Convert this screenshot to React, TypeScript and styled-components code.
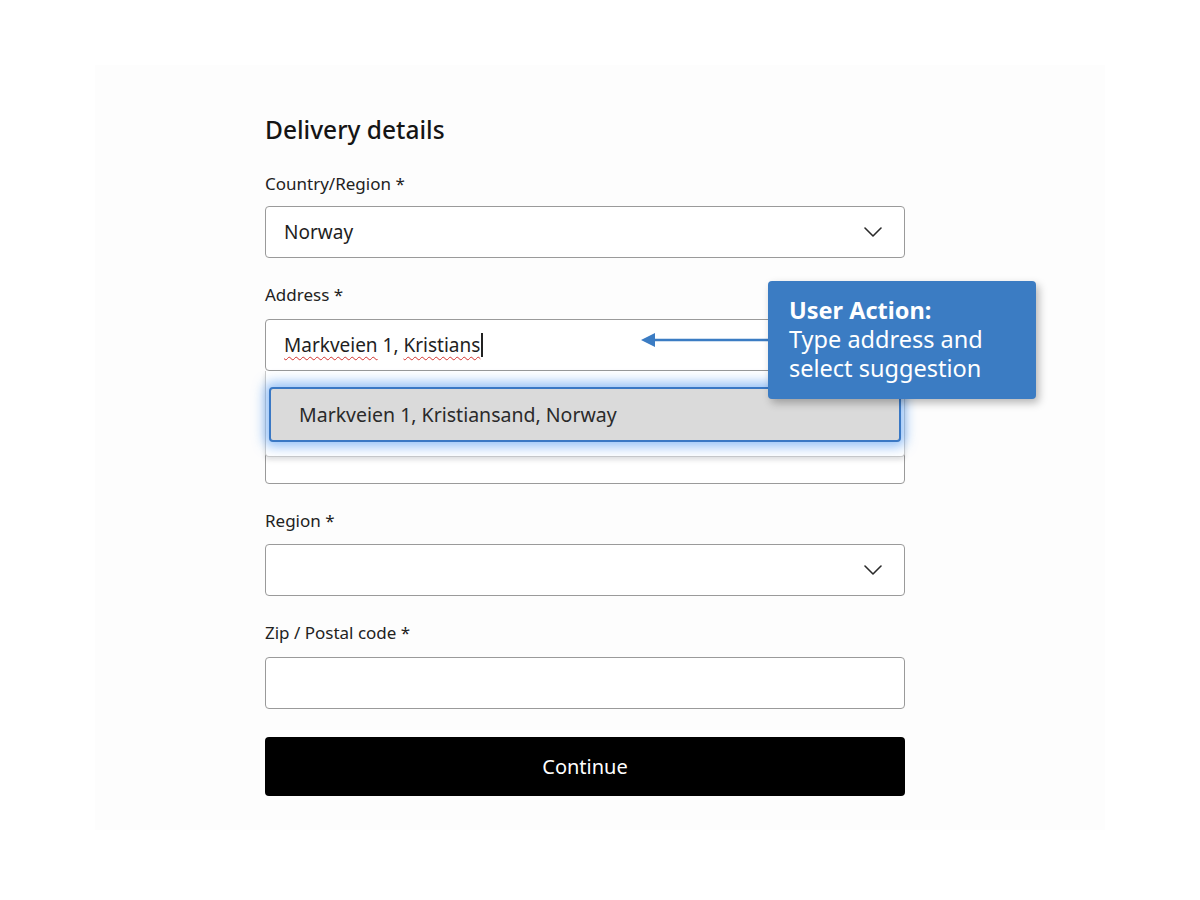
import React from "react";
import styled, { createGlobalStyle } from "styled-components";

const GlobalStyle = createGlobalStyle`
  html, body {
    margin: 0;
    padding: 0;
    background: #ffffff;
  }
  body {
    font-family: "Noto Sans", "Open Sans", Arial, sans-serif;
    color: #1c1c1c;
  }
`;

const Page = styled.div`
  width: 1200px;
  height: 900px;
  display: flex;
  justify-content: center;
  align-items: flex-start;
  box-sizing: border-box;
  padding-top: 65px;
`;

const Backdrop = styled.div`
  width: 1010px;
  height: 765px;
  background: #fdfdfd;
  display: flex;
  justify-content: center;
`;

const Form = styled.div`
  width: 640px;
  margin-left: -30px;
  padding-top: 48px;
  display: flex;
  flex-direction: column;
  gap: 27px;
`;

const Heading = styled.h1`
  margin: 0;
  font-size: 24.5px;
  line-height: 34px;
  font-weight: 500;
  color: #151515;
`;

const Field = styled.div<{ $gap?: number }>`
  position: relative;
  display: flex;
  flex-direction: column;
  gap: ${(p) => p.$gap ?? 13}px;
`;

const Label = styled.label`
  height: 20px;
  font-size: 17px;
  line-height: 20px;
  color: #222;
`;

const Box = styled.div`
  height: 52px;
  box-sizing: border-box;
  border: 1.5px solid #9a9a9a;
  border-radius: 4px;
  background: #fff;
  display: flex;
  align-items: center;
  justify-content: space-between;
  padding: 0 22px 0 18px;
  font-size: 19px;
  color: #1e1e1e;
`;

const Typed = styled.span`
  display: inline-flex;
  align-items: center;
`;

const Misspelled = styled.span`
  text-decoration: underline wavy #d2322d;
  text-decoration-thickness: 1px;
  text-underline-offset: 4px;
`;

const Caret = styled.span`
  display: inline-block;
  width: 1.5px;
  height: 24px;
  background: #222;
  margin-left: 1px;
`;

const Dropdown = styled.div`
  position: absolute;
  left: 0;
  right: 0;
  top: 86px;
  height: 86px;
  box-sizing: border-box;
  background: #fff;
  border: 1px solid #c9c9c9;
  border-top: none;
  border-radius: 0 0 4px 4px;
  box-shadow: 0 3px 5px rgba(0, 0, 0, 0.12);
  padding-top: 16px;
  z-index: 2;
`;

const Suggestion = styled.div`
  margin: 0 3px;
  height: 55px;
  box-sizing: border-box;
  background: #dadada;
  border: 2px solid #3a78c4;
  border-radius: 4px;
  box-shadow: 0 0 12px 5px rgba(70, 145, 240, 0.55);
  display: flex;
  align-items: center;
  padding-left: 28px;
  font-size: 19.5px;
  color: #2a2a2a;
`;

const Callout = styled.div`
  position: absolute;
  left: 503px;
  top: -4px;
  width: 268px;
  height: 118px;
  box-sizing: border-box;
  background: #3b7cc3;
  border-radius: 4px;
  box-shadow: 3px 4px 8px rgba(0, 0, 0, 0.28);
  color: #fff;
  padding: 15px 0 0 21px;
  font-size: 23.5px;
  line-height: 29px;
  z-index: 3;
`;

const CalloutTitle = styled.div`
  font-weight: 700;
`;

const Arrow = styled.svg`
  position: absolute;
  left: 376px;
  top: 47px;
  z-index: 3;
`;

const Button = styled.button`
  height: 59px;
  margin-top: 1px;
  border: none;
  border-radius: 4px;
  background: #000;
  color: #fff;
  font-family: inherit;
  font-size: 20px;
  cursor: pointer;
`;

function Chevron() {
  return (
    <svg width="18" height="10" viewBox="0 0 18 10" fill="none">
      <path d="M1 1l8 8 8-8" stroke="#2a2a2a" strokeWidth="1.6" strokeLinecap="round" strokeLinejoin="round" />
    </svg>
  );
}

export default function App() {
  return (
    <>
      <GlobalStyle />
      <Page>
        <Backdrop>
          <Form>
            <Heading>Delivery details</Heading>
            <Field $gap={12}>
              <Label>Country/Region *</Label>
              <Box>
                <span>Norway</span>
                <Chevron />
              </Box>
            </Field>
            <Field $gap={14}>
              <Label>Address *</Label>
              <Box>
                <Typed>
                  <Misspelled>Markveien</Misspelled>&nbsp;1,&nbsp;
                  <Misspelled>Kristians</Misspelled>
                  <Caret />
                </Typed>
              </Box>
              <Dropdown>
                <Suggestion>Markveien 1, Kristiansand, Norway</Suggestion>
              </Dropdown>
              <Arrow width="130" height="16" viewBox="0 0 130 16">
                <path d="M4 8H130" stroke="#3b7cc3" strokeWidth="2.5" />
                <path d="M0 8l14-7v14z" fill="#3b7cc3" />
              </Arrow>
              <Callout>
                <CalloutTitle>User Action:</CalloutTitle>
                <div>Type address and</div>
                <div>select suggestion</div>
              </Callout>
            </Field>
            {/* field hidden under the suggestion list */}
            <Field $gap={14}>
              <Label />
              <Box />
            </Field>
            <Field>
              <Label>Region *</Label>
              <Box>
                <span />
                <Chevron />
              </Box>
            </Field>
            <Field $gap={14}>
              <Label>Zip / Postal code *</Label>
              <Box />
            </Field>
            <Button>Continue</Button>
          </Form>
        </Backdrop>
      </Page>
    </>
  );
}
